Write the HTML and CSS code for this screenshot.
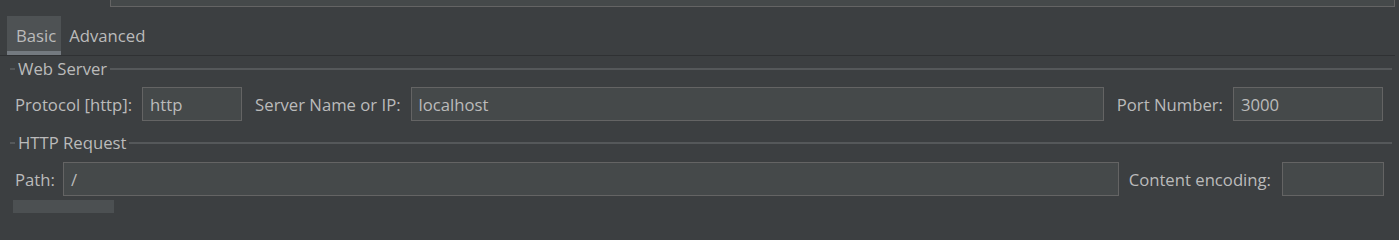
FILE: index.html
```html
<!DOCTYPE html>
<html>
<head>
<meta charset="utf-8">
<link rel="stylesheet" href="styles.css">
</head>
<body>
<div class="top-field"></div>
<div class="tabs">
  <div class="tab active">Basic</div>
  <div class="tab">Advanced</div>
</div>
<div class="group-title"><span class="dash"></span><span class="title-text">Web Server</span><span class="line"></span></div>
<div class="row row-server">
  <label class="lbl first">Protocol [http]:</label>
  <div class="field w-protocol">http</div>
  <label class="lbl">Server Name or IP:</label>
  <div class="field grow">localhost</div>
  <label class="lbl">Port Number:</label>
  <div class="field w-port">3000</div>
</div>
<div class="group-title second"><span class="dash"></span><span class="title-text">HTTP Request</span><span class="line"></span></div>
<div class="row row-path">
  <label class="lbl first tight">Path:</label>
  <div class="field grow">/</div>
  <label class="lbl wide">Content encoding:</label>
  <div class="field w-enc"></div>
</div>
<div class="bottom-tab"></div>
</body>
</html>
```
FILE: styles.css
```css
html, body {
  margin: 0;
  padding: 0;
  background: #3c3f41;
  overflow: hidden;
}
body {
  width: 1399px;
  height: 213px;
  font-family: "Open Sans", "Noto Sans", sans-serif;
  font-size: 16.7px;
  color: #bbbbbb;
}
.top-field {
  margin-left: 110px;
  width: 1283px;
  height: 6px;
  background: #45494a;
  border: 1px solid #646464;
  border-top: none;
}
.tabs {
  margin-top: 9px;
  margin-right: 4px;
  padding-left: 7px;
  height: 39px;
  display: flex;
  border-bottom: 1px solid #2f3133;
}
.tab {
  height: 39px;
  box-sizing: border-box;
  padding: 4px 8px 0 8px;
  display: flex;
  align-items: center;
  border-bottom: 4px solid transparent;
  flex-shrink: 0;
}
.tab.active {
  background: #4e5254;
  border-bottom-color: #747a80;
  padding-left: 9px;
  padding-right: 5px;
}
.group-title {
  margin-top: 3px;
  height: 20px;
  display: flex;
  align-items: center;
  padding-left: 10px;
  padding-right: 7px;
}
.group-title.second {
  margin-top: 12px;
}
.dash, .line {
  height: 2px;
  background: #55585a;
}
.dash {
  width: 5px;
  flex-shrink: 0;
}
.line {
  flex: 1;
}
.title-text {
  padding: 0 3px 0 3px;
  line-height: 20px;
}
.row {
  display: flex;
  align-items: center;
  height: 34px;
  padding-left: 15px;
}
.row-server {
  margin-top: 8px;
  padding-right: 16px;
}
.row-path {
  margin-top: 9px;
  padding-right: 15px;
}
.lbl {
  margin-left: 13px;
  margin-right: 10px;
  white-space: nowrap;
  flex-shrink: 0;
}
.lbl.first {
  margin-left: 0;
}
.lbl.tight {
  margin-right: 8px;
}
.lbl.wide {
  margin-left: 10px;
  margin-right: 11px;
}
.field {
  box-sizing: border-box;
  height: 34px;
  background: #45494a;
  border: 1px solid #646464;
  padding-left: 7px;
  display: flex;
  align-items: center;
  white-space: nowrap;
  flex-shrink: 0;
}
.w-protocol { width: 100px; }
.w-port { width: 150px; }
.w-enc { width: 102px; }
.grow { flex: 1 1 0; min-width: 0; }
.bottom-tab {
  margin-top: 4px;
  margin-left: 13px;
  width: 101px;
  height: 13px;
  background: #4c5052;
}
```
